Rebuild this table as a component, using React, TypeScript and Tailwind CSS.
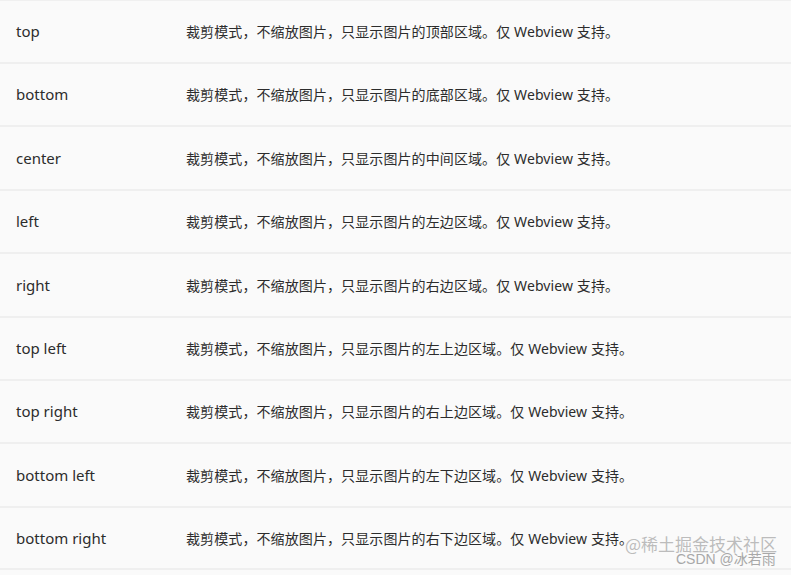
import React from "react";

const rows: { name: string; area: string; h: string }[] = [
  { name: "top", area: "顶部", h: "h-[63px]" },
  { name: "bottom", area: "底部", h: "h-[63px]" },
  { name: "center", area: "中间", h: "h-[64px]" },
  { name: "left", area: "左边", h: "h-[63px]" },
  { name: "right", area: "右边", h: "h-[64px]" },
  { name: "top left", area: "左上边", h: "h-[63px]" },
  { name: "top right", area: "右上边", h: "h-[63px]" },
  { name: "bottom left", area: "左下边", h: "h-[64px]" },
  { name: "bottom right", area: "右下边", h: "h-[62px]" },
];

export default function App() {
  return (
    <div
      className="relative w-[791px] h-[575px] overflow-hidden bg-[#fafafa] text-[#2c2c2c]"
      style={{ fontFamily: '"Noto Sans", "Noto Sans CJK SC", sans-serif' }}
    >
      <div className="border-t border-[#f0f0f0]">
        {rows.map((r) => (
          <div key={r.name} className={`flex items-center border-b-2 border-[#efefef] ${r.h}`}>
            <div className="w-[186px] pl-4 text-[15px]">{r.name}</div>
            <div className="text-[14px] tracking-[0.1px]">
              裁剪模式，不缩放图片，只显示图片的{r.area}区域。仅 Webview 支持。
            </div>
          </div>
        ))}
      </div>
      <div
        className="absolute left-[625px] top-[535px] text-[17px] leading-none text-[#bcbcbc] [text-shadow:0_0_1px_#fff]"
        style={{ fontFamily: '"Noto Sans CJK SC", sans-serif' }}
      >
        @稀土掘金技术社区
      </div>
      <div
        className="absolute left-[676px] top-[552px] text-[14px] leading-none text-[#a8a8a8]"
        style={{ fontFamily: '"Liberation Sans", "Noto Sans CJK SC", sans-serif' }}
      >
        CSDN @冰若雨
      </div>
    </div>
  );
}
